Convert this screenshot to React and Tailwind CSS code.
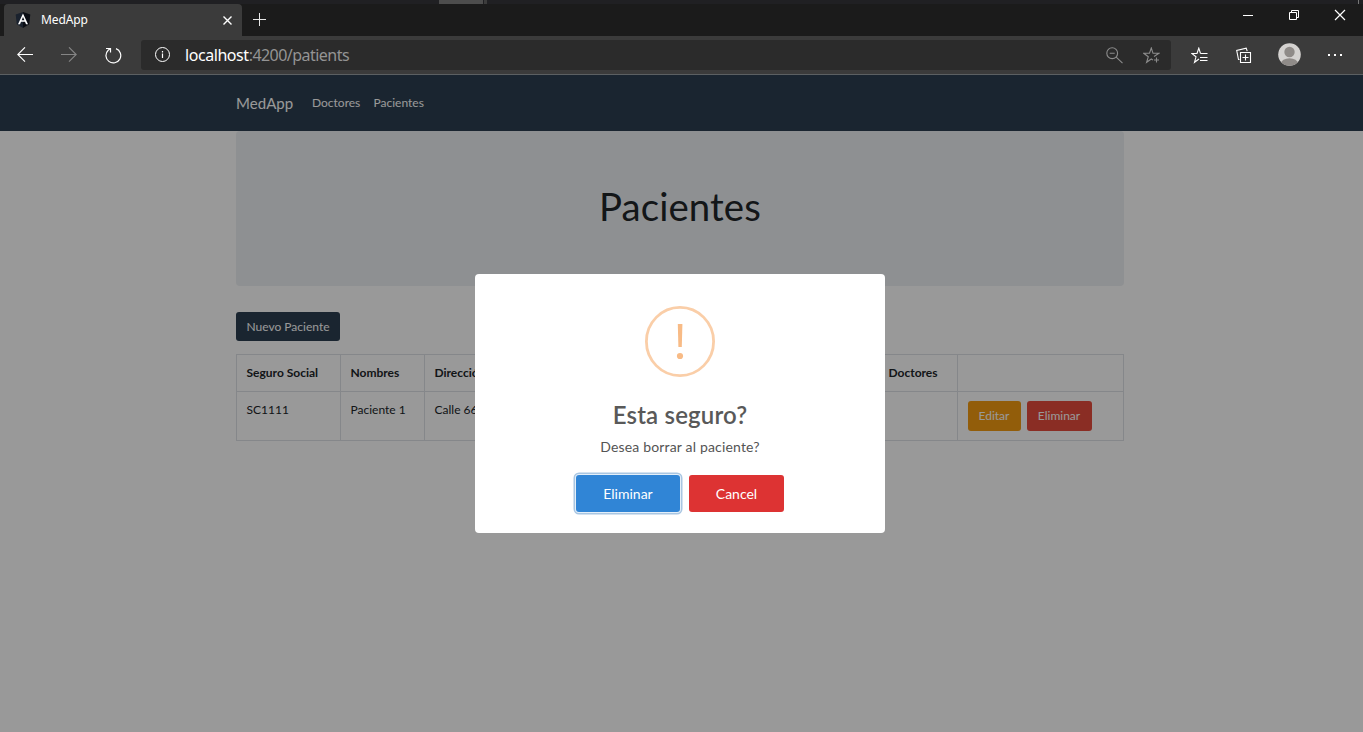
import React from 'react';

function AngularIcon() {
  return (
    <svg width="16" height="16" viewBox="0 0 16 16">
      <path d="M8 0 0.7 2.6 1.8 12.3 8 16z" fill="#1a222e" />
      <path d="M8 0 15.3 2.6 14.2 12.3 8 16z" fill="#0a0d14" />
      <path d="M8 1.6 3 12.2h2l1-2.4h4l1 2.4h2zM8 5l1.4 3.2H6.6z" fill="#fff" fillRule="evenodd" />
    </svg>
  );
}

function TabStrip() {
  return (
    <div className="relative flex h-9 bg-[#1b1b1b] pt-1 pl-1">
      <div className="absolute inset-x-0 top-0 flex h-1 bg-[#202023]">
        <div className="ml-[439px] h-full w-11 bg-[#4d4d4d]" />
        <div className="ml-px h-full w-[3px] bg-[#3c3c3c]" />
        <div className="mr-1 ml-auto h-full w-px bg-[#777]" />
      </div>
      <div className="relative flex w-[238px] items-center rounded-t bg-[#3b3b3b] pl-[11px]">
        <AngularIcon />
        <span className="ml-[10px] text-[12px] tracking-[-0.1px] text-white">MedApp</span>
        <svg className="mt-px mr-[10px] ml-auto" width="9" height="9" viewBox="0 0 9 9" stroke="#fff" strokeWidth="1.4">
          <path d="M.5 .5l8 8M8.5 .5l-8 8" />
        </svg>
      </div>
      <svg className="mt-[9px] ml-[11px]" width="13" height="13" viewBox="0 0 13 13" stroke="#e8e8e8">
        <path d="M6.5 0v13M0 6.5h13" />
      </svg>
      <div className="mr-[17px] ml-auto flex items-start pt-[5px]">
        <svg className="mr-[35px]" width="11" height="12" stroke="#fff">
          <path d="M1 6.500h10" />
        </svg>
        <svg className="mr-[35px]" width="11" height="12" viewBox="0 0 11 12" fill="none" stroke="#fff">
          <path d="M1.500 3.500h7v7h-7zM3.500 3.500v-2h7v7h-2" />
        </svg>
        <svg width="12" height="12" viewBox="0 0 12 12" stroke="#fff" strokeWidth="1.200">
          <path d="M1 1l10 10M11 1L1 11" />
        </svg>
      </div>
    </div>
  );
}

function Toolbar() {
  return (
    <div className="flex h-[39px] items-center border-b border-[#5c6062] bg-[#3b3b3b] pl-[17px]">
      <svg width="16" height="16" viewBox="0 0 16 16" fill="none" stroke="#fff" strokeWidth="1.100">
        <path d="M16 7.500H.8M8 .3L.8 7.500 8 14.700" />
      </svg>
      <svg className="ml-7" width="16" height="16" viewBox="0 0 16 16" fill="none" stroke="#858585" strokeWidth="1.100">
        <path d="M0 7.500h15.200M8 .3L15.200 7.500 8 14.700" />
      </svg>
      <svg className="ml-7" width="17" height="17" viewBox="0 0 17 17" fill="none" stroke="#fff" strokeWidth="1.200">
        <path d="M11 1.600A7.400 7.400 0 1 1 3.200 3.200L5.300 1.500M1 1.500h4.500v4" />
      </svg>
      <div className="ml-[19px] flex h-[30px] w-[1030px] items-center rounded-[3px] bg-[#2b2b2b] pl-[13px]">
        <svg width="17" height="16" viewBox="0 0 17 16" fill="none" stroke="#fff">
          <circle cx="8.500" cy="7.500" r="7" />
          <path d="M8.500 6.500v4.500M8.500 4v1.400" strokeWidth="1.200" />
        </svg>
        <span className="ml-[14px] text-[16px] leading-5 tracking-[-0.540px] text-[#949494]">
          <span className="tracking-[-0.440px] text-white">localhost</span>:4200/patients
        </span>
        <svg className="mr-5 ml-auto" width="17" height="17" viewBox="0 0 17 17" fill="none" stroke="#8c8c8c" strokeWidth="1.100">
          <circle cx="6.200" cy="6.200" r="5.400" />
          <path d="M3.700 6.200h5M10.200 10.200l6.300 6" />
        </svg>
        <svg className="mr-[11px]" width="17" height="17" viewBox="0 0 17 17" fill="none" stroke="#8c8c8c" strokeWidth="1.100">
          <path d="M11 9.500L16 6.300H10L8.300 1 6.500 6.300H.8L5.300 9.700 3.600 15.300 8.300 12l1.700 1.100M13.500 10.500v5M11 13h5" />
        </svg>
      </div>
      <svg className="ml-5" width="17" height="17" viewBox="0 0 17 17" fill="none" stroke="#fff" strokeWidth="1.100">
        <path d="M9.500 6.500H16.500M9 10.500h7.500M9 13.500h7.500M9.500 6.500L7.800 1.200 6 6.500H.8L5 9.800 3.500 15.300 8 12" />
      </svg>
      <svg className="ml-7" width="16" height="17" viewBox="0 0 16 17" fill="none" stroke="#fff" strokeWidth="1.100">
        <path d="M4.500 5.500h10v10h-10zM9.500 7.500v6M6.500 10.500h6M3.500 12.500h-1L.7 3.500 10.200 1.200l1 3" />
      </svg>
      <svg className="mb-px ml-[25.500px]" width="23" height="23" viewBox="0 0 23 23">
        <defs>
          <clipPath id="avatar"><circle cx="11.500" cy="11.500" r="11.300" /></clipPath>
        </defs>
        <g clipPath="url(#avatar)">
          <rect width="23" height="23" fill="#d4d2d0" />
          <circle cx="11.500" cy="9" r="5.200" fill="#8f8b88" />
          <ellipse cx="11.500" cy="20.500" rx="8.500" ry="5.200" fill="#8f8b88" />
        </g>
      </svg>
      <svg className="ml-[27.500px]" width="16" height="4" fill="#fff">
        <path d="M0 1h2v2H0zM6 1h2v2h-2zM12 1h2v2h-2z" />
      </svg>
    </div>
  );
}

function Page() {
  return (
    <div className="h-full bg-white font-['Lato',sans-serif] text-[12px] text-[#212529]">
      <nav className="flex h-14 items-center bg-[#2c3e50] pl-[236px] text-white">
        <span className="w-[76px] text-[15px] tracking-[0.05px]">MedApp</span>
        <span className="w-[61.500px] text-[12px]">Doctores</span>
        <span className="text-[12px]">Pacientes</span>
      </nav>
      <main className="ml-[236px] w-[888px]">
        <div className="flex h-[155px] items-center justify-center rounded bg-[#edf0f3]">
          <h1 className="pb-1 text-[38.4px] leading-none tracking-[0.1px]">Pacientes</h1>
        </div>
        <button className="mt-[26px] flex h-[29px] w-[104px] items-center justify-center rounded-[3px] bg-[#2c3e50] text-[12px] text-white">
          Nuevo Paciente
        </button>
        <table className="mt-[13px] w-[887px] table-fixed border-collapse text-left">
          <colgroup>
            <col className="w-[104px]" />
            <col className="w-[84px]" />
            <col className="w-[104px]" />
            <col className="w-[350px]" />
            <col className="w-[79px]" />
            <col className="w-[166px]" />
          </colgroup>
          <thead>
            <tr className="h-[37px] [&>th]:border [&>th]:border-[#dee2e6] [&>th]:px-[9.500px] [&>th]:font-bold">
              <th>Seguro Social</th>
              <th>Nombres</th>
              <th>Dirección</th>
              <th></th>
              <th>Doctores</th>
              <th></th>
            </tr>
          </thead>
          <tbody>
            <tr className="h-[49px] [&>td]:border [&>td]:border-[#dee2e6] [&>td]:px-[9.500px] [&>td]:pt-[9px] [&>td]:align-top">
              <td>SC1111</td>
              <td>Paciente 1</td>
              <td>Calle 66</td>
              <td></td>
              <td></td>
              <td>
                <div className="flex gap-[6px] text-white">
                  <button className="h-[30px] w-[53px] rounded-[3px] bg-[#f39c12]">Editar</button>
                  <button className="h-[30px] w-[65px] rounded-[3px] bg-[#e74c3c]">Eliminar</button>
                </div>
              </td>
            </tr>
          </tbody>
        </table>
      </main>
    </div>
  );
}

function ConfirmDialog() {
  return (
    <div className="absolute inset-0 bg-black/40 font-['Lato',sans-serif]">
      <div className="mt-[199px] ml-[475px] flex h-[259px] w-[410px] flex-col items-center rounded bg-white pt-8">
        <svg width="70" height="71" viewBox="0 0 70 71">
          <ellipse cx="35" cy="35.500" rx="33.600" ry="34.100" fill="none" stroke="#facea8" strokeWidth="2.800" />
          <path d="M32.800 18h4.600l-.6 23h-3.400z" fill="#f8bb86" />
          <circle cx="35" cy="50" r="3.100" fill="#f8bb86" />
        </svg>
        <h2 className="mt-[23px] text-[24px] leading-[30px] font-semibold tracking-[0.17px] text-[#595959]">Esta seguro?</h2>
        <p className="mt-[7px] text-[14px] leading-5 tracking-[0.17px] text-[#545454]">Desea borrar al paciente?</p>
        <div className="mt-[18px] flex gap-[9px] text-[14px] text-white">
          <button className="h-[37px] w-[104px] rounded-[3px] bg-[#3085d6] shadow-[0_0_0_1px_#e4eff9,0_0_0_2.500px_#a9c6e2]">Eliminar</button>
          <button className="h-[37px] w-[95px] rounded-[3px] bg-[#dd3333]">Cancel</button>
        </div>
      </div>
    </div>
  );
}

export default function App() {
  return (
    <div className="flex h-[732px] w-[1363px] flex-col overflow-hidden whitespace-nowrap font-['Noto_Sans','Open_Sans',sans-serif]">
      <TabStrip />
      <Toolbar />
      <div className="relative min-h-0 flex-1">
        <Page />
        <ConfirmDialog />
      </div>
    </div>
  );
}
